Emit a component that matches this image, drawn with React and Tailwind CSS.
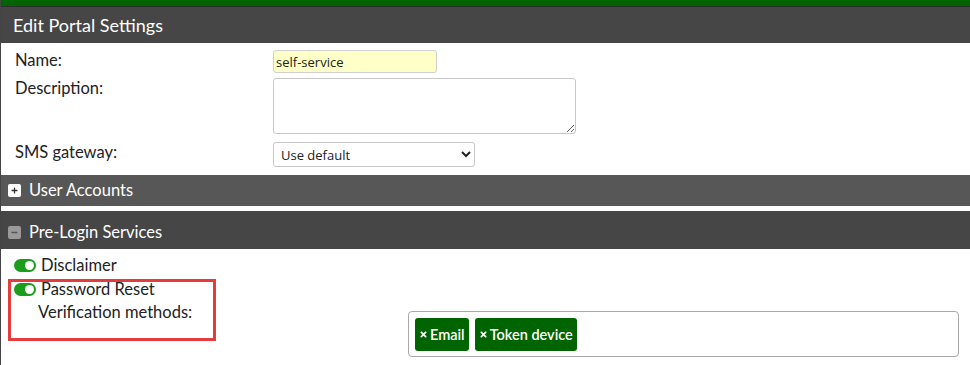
import { FaPlus, FaMinus, FaTimes } from "react-icons/fa";

const Toggle = () => (
  <span className="inline-flex items-center w-[22px] h-[13px] rounded-full bg-[#1a9d1a] justify-end pr-[2px] mr-[5px]">
    <span className="w-[9px] h-[9px] rounded-full bg-white" />
  </span>
);

const SectionBar = ({ icon, title, light }) => (
  <div
    className={`flex items-center pl-[7px] text-white text-[16.5px] ${
      light ? "bg-[#575757] h-[31px]" : "bg-[#464646] h-[38px] pt-[4px]"
    }`}
  >
    {icon}
    <span className="ml-[8px]">{title}</span>
  </div>
);

const Tag = ({ label }) => (
  <span className="inline-flex items-center h-[33px] px-[4px] rounded-[3px] bg-[#006400] text-white text-[14.5px] font-semibold">
    <FaTimes className="w-[9px] h-[9px] mr-[2px]" />
    {label}
  </span>
);

export default function App() {
  return (
    <div
      className="w-[970px] h-[365px] bg-white overflow-hidden border-l border-[#444]"
      style={{ fontFamily: "Lato, 'Open Sans', sans-serif" }}
    >
      <div className="h-[6px] bg-[#006400]" />
      <div className="h-[1px] bg-[#2e2e2e]" />
      <div className="h-[36px] bg-[#464646] flex items-center pl-[12px] text-white text-[18px]">
        Edit Portal Settings
      </div>

      <div className="text-[16.5px] leading-[20px] text-[#222]">
        <div className="flex pt-[7px]">
          <div className="w-[272px] pl-[14px]">Name:</div>
          <input
            defaultValue="self-service"
            className="w-[164px] h-[23px] bg-[#ffffc8] border border-[#d0d0d0] rounded-[3px] px-[2px] text-[13px] outline-none"
            style={{ fontFamily: "'Open Sans', sans-serif" }}
          />
        </div>
        <div className="flex pt-[5px]">
          <div className="w-[272px] pl-[14px]">Description:</div>
          <textarea className="w-[303px] h-[56px] border border-[#c8c8c8] rounded-[3px] outline-none resize-y" />
        </div>
        <div className="flex pt-[8px] pb-[8px]">
          <div className="w-[272px] pl-[14px]">SMS gateway:</div>
          <select
            className="w-[202px] h-[25px] border border-[#c8c8c8] rounded-[3px] text-[13px] pl-[3px] bg-white outline-none"
            style={{ fontFamily: "'Open Sans', sans-serif" }}
          >
            <option>Use default</option>
          </select>
        </div>
      </div>

      <SectionBar
        light
        title="User Accounts"
        icon={
          <span className="w-[13px] h-[13px] bg-white rounded-[2px] flex items-center justify-center text-[#333]">
            <FaPlus className="w-[7px] h-[7px]" />
          </span>
        }
      />
      <div className="h-[5px]" />
      <SectionBar
        title="Pre-Login Services"
        icon={
          <span className="w-[13px] h-[13px] bg-[#9a9a9a] rounded-[2px] flex items-center justify-center text-[#555]">
            <FaMinus className="w-[7px] h-[7px]" />
          </span>
        }
      />

      <div className="text-[16.5px] text-[#222]">
        <div className="flex items-center pl-[13px] pt-[3px] h-[29px]">
          <Toggle />
          Disclaimer
        </div>
        <div className="flex">
          <div className="w-[208px] h-[62px] ml-[7px] mt-[1px] border-[3px] border-[#e33c3c] pl-[3px]">
            <div className="flex items-center h-[14px]">
              <Toggle />
              Password Reset
            </div>
            <div className="pl-[24px] pt-[4px]">Verification methods:</div>
          </div>
          <div className="ml-[192px] mt-[33px] w-[551px] h-[46px] border border-[#a8a8a8] rounded-[4px] flex items-start gap-[6px] pl-[6px] pt-[6px]">
            <Tag label="Email" />
            <Tag label="Token device" />
          </div>
        </div>
      </div>
    </div>
  );
}
